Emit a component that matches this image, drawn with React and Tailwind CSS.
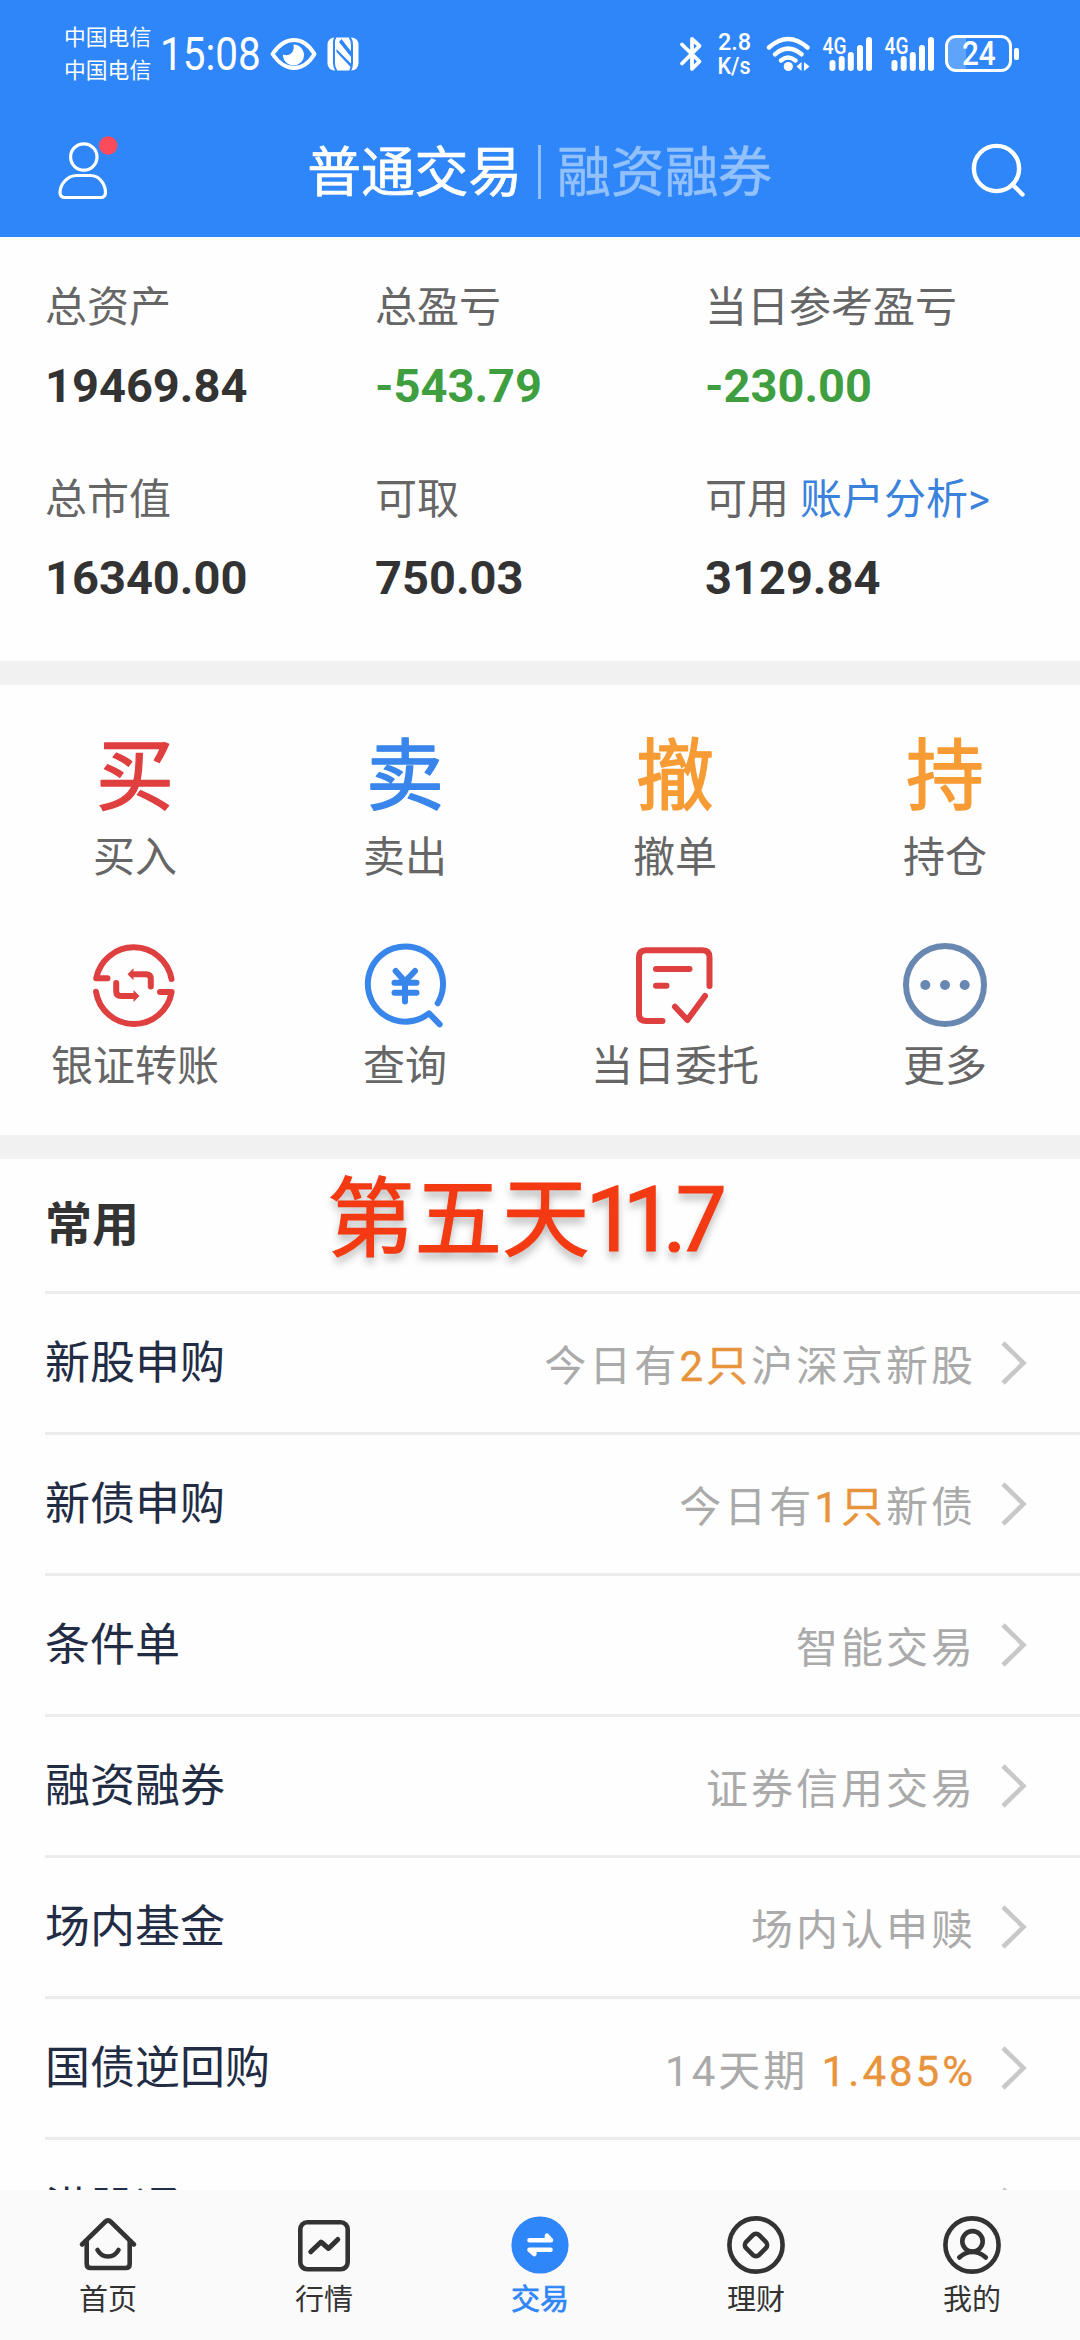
import React from "react";

const stats = [
  { label: "总资产", value: "19469.84", tone: "text-[#333333]" },
  { label: "总盈亏", value: "-543.79", tone: "text-[#3f9e3f]" },
  { label: "当日参考盈亏", value: "-230.00", tone: "text-[#3f9e3f]" },
  { label: "总市值", value: "16340.00", tone: "text-[#333333]" },
  { label: "可取", value: "750.03", tone: "text-[#333333]" },
  { label: "可用", link: "账户分析>", value: "3129.84", tone: "text-[#333333]" },
];

const rows = [
  { title: "新股申购", note: ["今日有", "2只", "沪深京新股"] },
  { title: "新债申购", note: ["今日有", "1只", "新债"] },
  { title: "条件单", note: ["智能交易"] },
  { title: "融资融券", note: ["证券信用交易"] },
  { title: "场内基金", note: ["场内认申赎"] },
  { title: "国债逆回购", note: ["14天期 ", "1.485%"] },
  { title: "港股通", note: [""] },
];

function CharIcon({ char, className }) {
  return (
    <svg width="84" height="84" viewBox="0 0 84 84" className={"overflow-visible " + className}>
      <text
        x="42"
        y="70"
        textAnchor="middle"
        fontSize="78"
        fontWeight="400"
        fill="currentColor"
        stroke="currentColor"
        strokeWidth="1.4"
        strokeLinejoin="round"
      >
        {char}
      </text>
    </svg>
  );
}

function LineIcon({ className, children }) {
  return (
    <svg
      width="84"
      height="84"
      viewBox="0 0 84 84"
      fill="none"
      stroke="currentColor"
      strokeWidth="6"
      strokeLinecap="round"
      strokeLinejoin="round"
      className={"overflow-visible " + className}
    >
      {children}
    </svg>
  );
}

const actions = [
  { label: "买入", icon: <CharIcon char="买" className="text-[#e03f3f]" /> },
  { label: "卖出", icon: <CharIcon char="卖" className="text-[#3885ec]" /> },
  { label: "撤单", icon: <CharIcon char="撤" className="text-[#f79b34]" /> },
  { label: "持仓", icon: <CharIcon char="持" className="text-[#f79b34]" /> },
  {
    label: "银证转账",
    icon: (
      <LineIcon className="text-[#de4040]">
        <path d="M14.5 35.3H3.2A38.3 38.3 0 0 1 78.5 36" />
        <path d="M67 49H78.6A38.3 38.3 0 0 1 3 48.7" />
        <path d="M57.8 43.5V36q0-4.7-4.7-4.7H42" />
        <path d="M23.2 40v8.3q0 4.7 4.7 4.7H40" />
        <path d="M34.5 31.3l6-6v12zM46.5 53l-6-6v12z" fill="currentColor" stroke="none" />
      </LineIcon>
    ),
  },
  {
    label: "查询",
    icon: (
      <LineIcon className="text-[#3885ec]">
        <path d="M74.7 60.3A37.6 37.6 0 1 0 66 70.3L76.7 81.3" />
        <path d="M32.7 28L42 38.5L52 28M42 38.5V58.5M31.5 39.8h22M31.5 49.8h22" />
      </LineIcon>
    ),
  },
  {
    label: "当日委托",
    icon: (
      <LineIcon className="text-[#de4040]">
        <path d="M76.5 43V14.3q0-7-7-7H13q-7 0-7 7V71q0 7 7 7H29.5" />
        <path d="M23 26H56.5M23 42.7H33.5M42 63.7L54.4 77L72 53" />
      </LineIcon>
    ),
  },
  {
    label: "更多",
    icon: (
      <LineIcon className="text-[#6888b2]">
        <circle cx="42" cy="42" r="39" />
        <g fill="currentColor" stroke="none">
          <circle cx="22.3" cy="42" r="5" />
          <circle cx="42" cy="42" r="5" />
          <circle cx="61.7" cy="42" r="5" />
        </g>
      </LineIcon>
    ),
  },
];

const tabs = [
  {
    label: "首页",
    art: (
      <>
        <path d="M4 29.5L27 7Q30 4 33 7L56 29.5" />
        <path d="M8.7 27V49q0 4 4 4H47.7q4 0 4-4V27" />
        <path d="M19.5 35Q23 41.5 30 41.5T40.5 35" />
      </>
    ),
  },
  {
    label: "行情",
    art: (
      <>
        <rect x="6.3" y="7.3" width="47.4" height="47" rx="7" />
        <path d="M16.8 36.8L27 27L34.5 33.5L43.8 24.5" strokeWidth="5" />
      </>
    ),
  },
  {
    label: "交易",
    active: true,
    art: (
      <>
        <circle cx="30" cy="30" r="28.6" fill="currentColor" stroke="none" />
        <g stroke="#fff" fill="#fff">
          <path d="M19.5 25.2H41L37 20.8V25M40.5 34.8H19.5L24.3 39V35" />
        </g>
      </>
    ),
  },
  {
    label: "理财",
    art: (
      <>
        <circle cx="30" cy="30" r="26.6" />
        <rect x="20.8" y="20.8" width="18.4" height="18.4" rx="4.5" transform="rotate(45 30 30)" />
      </>
    ),
  },
  {
    label: "我的",
    art: (
      <>
        <circle cx="30" cy="30" r="26.6" />
        <circle cx="30.5" cy="26.3" r="10.2" />
        <path d="M17.3 42.5Q23 37 30.5 37T43.8 42.5" />
      </>
    ),
  },
];

function Signal() {
  return (
    <svg width="52" height="40" viewBox="0 0 52 40" fill="currentColor">
      <text x="0.5" y="19.5" fontSize="23" fontWeight="500" textLength="24" lengthAdjust="spacingAndGlyphs">
        4G
      </text>
      <rect x="7.5" y="26" width="6" height="11" rx="3" />
      <rect x="16.7" y="22" width="6" height="15" rx="3" />
      <rect x="25.8" y="18" width="6" height="19" rx="3" />
      <rect x="35" y="11" width="6" height="26" rx="3" />
      <rect x="44" y="3" width="6" height="34" rx="3" />
    </svg>
  );
}

function StatusBar() {
  return (
    <div className="flex h-[107px] items-center justify-between pl-[64px] pr-[61px]">
      <div className="flex items-center">
        <div className="flex flex-col text-[21.8px] leading-[33px]">
          <span>中国电信</span>
          <span>中国电信</span>
        </div>
        <span className="ml-[9px] w-[101px] origin-left scale-x-[0.88] whitespace-nowrap text-[46px] leading-[54px]">15:08</span>
        <svg width="48" height="34" viewBox="0 0 48 34" className="ml-[8px]" fill="none">
          <path d="M3.5 17Q13 3 25 3T45.500 17Q37 31 25 31T3.500 17Z" stroke="currentColor" strokeWidth="4" strokeLinejoin="round" />
          <path d="M24.500 7.500A10.500 10.500 0 1 1 14 17.500Q18.500 19.500 22 16.500T24.500 7.500Z" fill="currentColor" />
        </svg>
        <svg width="32" height="34" viewBox="0 0 32 34" className="ml-[10px]">
          <rect x="0.500" y="0.500" width="31" height="33" rx="7" fill="currentColor" />
          <g fill="none" stroke="#2f86f8" strokeWidth="2">
            <path d="M8.500 0Q6.500 3 7 8V26Q7 31 9.500 34" />
            <path d="M22.500 0Q25 3 25 8V26Q25 31 23 34" />
          </g>
          <path d="M14.500 2L24.500 15V20.500L12 5zM9.500 12L24.500 27V31L9.500 15z" fill="#2f86f8" />
        </svg>
      </div>
      <div className="flex items-center">
        <svg width="24" height="38" viewBox="0 0 24 38" fill="none" stroke="currentColor" strokeWidth="3.800" strokeLinecap="round" strokeLinejoin="round">
          <path d="M3 9.500L20.500 26.500L13 34V4L20.500 11L3 28.500" />
        </svg>
        <div className="ml-[14px] mt-[2px] flex w-[35px] flex-col items-center text-[23.5px] font-medium leading-[23.5px]">
          <span>2.8</span>
          <span className="scale-x-[0.92]">K/s</span>
        </div>
        <svg width="46" height="38" viewBox="0 0 46 38" className="ml-[14px]" fill="none" stroke="currentColor" strokeWidth="4.400" strokeLinecap="round">
          <path d="M3 12.500Q22 -4.500 41.500 12.500M9 19.300Q22 8 35.500 19.300M15 25.500Q22 19.500 29.500 25.500" />
          <circle cx="22.300" cy="31.500" r="4.600" fill="currentColor" stroke="none" />
          <path d="M30.500 31.500L35.500 27V36zM43.500 31.500L38 27V36z" fill="currentColor" stroke="none" />
        </svg>
        <div className="ml-[10px] flex gap-[10px]">
          <Signal />
          <Signal />
        </div>
        <div className="ml-[9px] flex h-[37px] w-[67px] items-center justify-center rounded-[11px] border-[3px] border-white bg-[linear-gradient(90deg,#5fa4fb_18px,transparent_18px)] text-[33px] font-medium leading-none">
          <span className="scale-x-[0.9]">24</span>
        </div>
        <span className="ml-[2px] h-[12px] w-[5px] rounded-[2px] bg-white" />
      </div>
    </div>
  );
}

function TitleBar() {
  return (
    <div className="flex h-[130px] items-center justify-between pl-[56px] pr-[51px]">
      <svg width="66" height="66" viewBox="0 0 66 66" className="-mt-[7px]" fill="none" stroke="currentColor" strokeWidth="3.200">
        <circle cx="27.800" cy="21" r="13.200" />
        <path d="M21 39.500H34.500C44 39.500 49.500 49 49.500 56.500Q49.500 61.500 44.500 61.500H9Q4 61.500 4 56.500C4 49 10.500 39.500 21 39.500Z" />
        <circle cx="52.200" cy="9.500" r="9.300" fill="#fe4b5b" stroke="none" />
      </svg>
      <div className="-ml-[12px] flex items-center text-[54px] leading-[60px] tracking-[-0.3px]">
        <span className="mt-[3px] [-webkit-text-stroke:0.7px_#fff]">普通交易</span>
        <span className="ml-[16px] mr-[16px] h-[54px] w-[3px] bg-[#8fc0fc]" />
        <span className="mt-[3px] text-[#92c1fc] [-webkit-text-stroke:0.5px_#92c1fc]">融资融券</span>
      </div>
      <svg width="60" height="60" viewBox="0 0 60 60" className="-mt-[4px]" fill="none" stroke="currentColor" strokeWidth="4.400" strokeLinecap="round">
        <circle cx="27.500" cy="28.500" r="22.600" />
        <path d="M43.500 44.500L53.500 54.500" />
      </svg>
    </div>
  );
}

export default function App() {
  return (
    <div className="flex h-[2340px] w-[1080px] flex-col overflow-hidden bg-[#fefefe] font-[Roboto,'Noto_Sans_CJK_SC',sans-serif]">
      <header className="h-[237px] shrink-0 bg-[#2f86f8] text-white">
        <StatusBar />
        <TitleBar />
      </header>

      <main className="flex min-h-0 flex-1 flex-col overflow-hidden">
        <section className="grid h-[424px] shrink-0 grid-cols-3 content-start gap-y-[54px] px-[45px] pt-[41px]">
          {stats.map((s) => (
            <div key={s.label} className="flex h-[138px] flex-col justify-between whitespace-nowrap">
              <div className="text-[42px] leading-[60px] text-[#666666]">
                {s.label}
                {s.link && <span className="ml-[11px] text-[#3b82dc]">{s.link}</span>}
              </div>
              <div className={"text-[47px] font-bold leading-[60px] " + s.tone}>{s.value}</div>
            </div>
          ))}
        </section>

        <div className="h-6 shrink-0 bg-[#f1f1f1]" />

        <section className="grid h-[450px] shrink-0 grid-cols-4 content-start gap-y-[16px] pt-[49px]">
          {actions.map((a) => (
            <div key={a.label} className="flex h-[193px] flex-col items-center">
              {a.icon}
              <span className="mt-[10px] text-[42px] leading-[60px] text-[#666666]">{a.label}</span>
            </div>
          ))}
        </section>

        <div className="h-6 shrink-0 bg-[#f1f1f1]" />

        <section className="shrink-0 pl-[45px]">
          <div className="relative flex h-[135px] items-center border-b-[3px] border-[#ececec]">
            <h2 className="text-[47px] font-bold leading-[60px] text-[#333333]">常用</h2>
            <div className="absolute left-[282px] top-[9px] flex items-center whitespace-nowrap text-[87.5px] leading-[104px] text-[#f43a13] [-webkit-text-stroke:1.2px_#f43a13] [text-shadow:0_6px_9px_rgba(0,0,0,0.3)]">
              第五天
              <span className="-ml-[4px] text-[91px] tracking-[-14px]">
                1<span className="tracking-[-11px]">1.</span>7
              </span>
            </div>
          </div>
          {rows.map((r) => (
            <div key={r.title} className="flex h-[141px] items-center justify-between border-b-[3px] border-[#ececec] pr-[53px]">
              <span className="mt-[2px] text-[45px] leading-[60px] text-[#222c45]">{r.title}</span>
              <span className="flex items-center">
                <span className="mt-[7px] whitespace-pre text-[42px] leading-[60px] tracking-[3px] text-[#aaaaaa]">
                  {r.note[0]}
                  <span className="text-[#e8943c] [-webkit-text-stroke:0.4px_#e8943c]">{r.note[1]}</span>
                  {r.note[2]}
                </span>
                <svg width="26" height="44" viewBox="0 0 26 44" className="ml-[25px]" fill="none" stroke="#c8c8c8" strokeWidth="4.600">
                  <path d="M2 2L22.500 22L2 42" />
                </svg>
              </span>
            </div>
          ))}
        </section>
      </main>

      <nav className="grid h-[150px] shrink-0 grid-cols-5 bg-[#fafafa] pt-[25px]">
        {tabs.map((t) => (
          <div key={t.label} className={"flex flex-col items-center " + (t.active ? "text-[#2f86f8]" : "text-[#333333]")}>
            <svg width="60" height="60" viewBox="0 0 60 60" fill="none" stroke="currentColor" strokeWidth="4.600" strokeLinecap="round" strokeLinejoin="round">
              {t.art}
            </svg>
            <span className={"mt-[5px] text-[29px] leading-[40px] " + (t.active ? "[-webkit-text-stroke:0.7px_#2f86f8]" : "")}>{t.label}</span>
          </div>
        ))}
      </nav>
    </div>
  );
}
